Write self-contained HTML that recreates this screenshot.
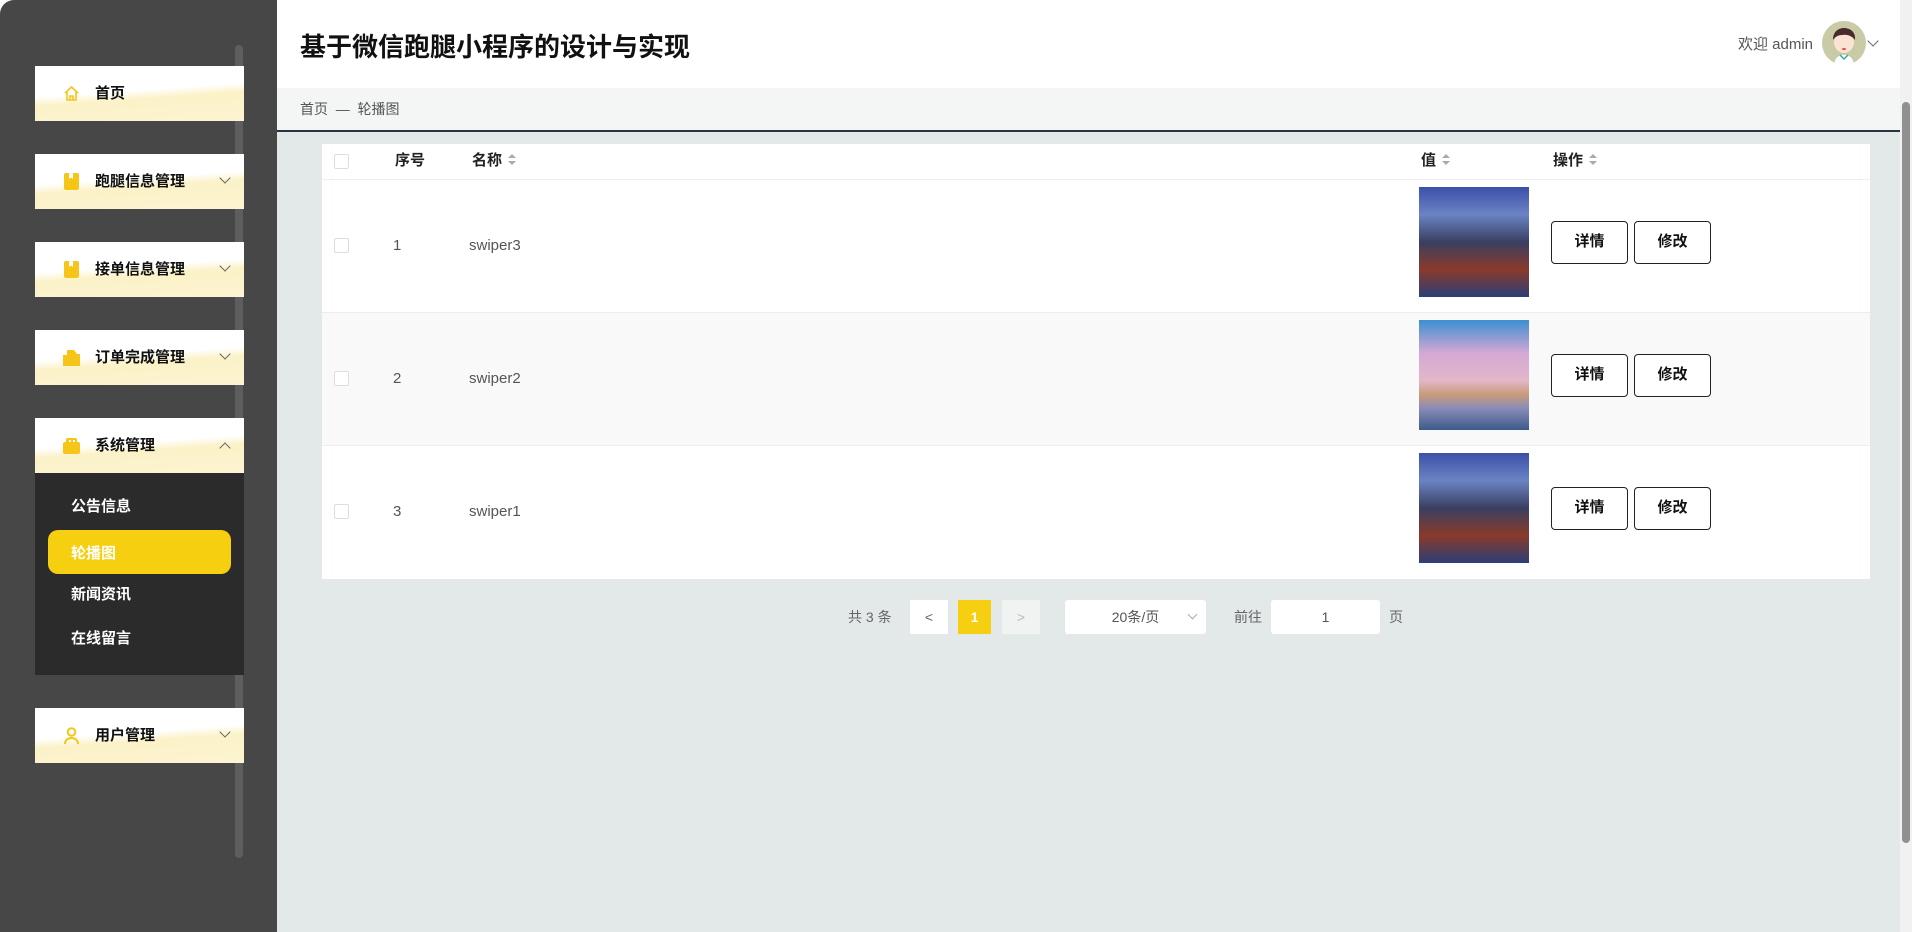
<!DOCTYPE html>
<html><head><meta charset="utf-8">
<style>
*{box-sizing:border-box;margin:0;padding:0}
body{width:1912px;height:932px;overflow:hidden;background:#fff;font-family:"Liberation Sans","Noto Sans CJK SC",sans-serif;position:relative}
.side{position:absolute;left:0;top:0;width:277px;height:932px;background:#474747;border-top-left-radius:14px}
.track{position:absolute;left:235px;top:45px;width:8px;height:813px;background:#5e5e5e;border-radius:4px}
.item{position:absolute;left:35px;width:209px;height:55px;background:linear-gradient(176deg,#fff 0,#fff 45%,#fbf2c8 58%,#fcf4d2 100%)}
.item .t{position:absolute;left:60px;top:0;line-height:55px;font-size:15px;font-weight:bold;color:#111}
.item .ic{position:absolute;left:28px;top:19px;width:17px;height:17px}
.item .ch{position:absolute;left:186px;top:20px;width:8px;height:8px;border-right:1.3px solid #666;border-bottom:1.3px solid #666;transform:rotate(45deg)}
.item .ch.up{transform:rotate(-135deg);top:26px}
.sub{position:absolute;left:35px;top:473px;width:209px;height:202px;background:#2b2b2b}
.sub div{position:absolute;left:36px;font-size:15px;font-weight:bold;color:#fff;line-height:20px}
.pill{position:absolute;left:48px;top:530px;width:183px;height:44px;background:#f6cf10;border-radius:10px}
.main{position:absolute;left:277px;top:0;width:1623px;height:932px;background:#e3e8e8}
.hdr{position:absolute;left:0;top:0;width:1623px;height:88px;background:#fff}
.title{position:absolute;left:23px;top:27px;font-size:26px;font-weight:bold;color:#111}
.bc{position:absolute;left:0;top:88px;width:1623px;height:44px;background:#f4f5f5;border-bottom:2px solid #2c3340;font-size:14px;color:#555;line-height:42px;padding-left:23px}
.tbl{position:absolute;left:45px;top:144px;width:1548px;height:433px;background:#fff}
.th{position:absolute;top:0;left:0;width:1548px;height:36px;border-bottom:1px solid #eee}
.th span{position:absolute;top:0;line-height:34px;font-size:15px;font-weight:bold;color:#222}
.sort{display:inline-block;margin-left:6px;vertical-align:middle;position:relative;top:-1px;width:8px;height:12px}
.sort:before{content:"";position:absolute;left:0;top:0;border:4px solid transparent;border-bottom:4px solid #aaa;border-top:0}
.sort:after{content:"";position:absolute;left:0;top:7px;border:4px solid transparent;border-top:4px solid #aaa;border-bottom:0}
.cb{position:absolute;left:12px;width:15px;height:15px;border:1px solid #ddd;border-radius:2px;background:#fff}
.row{position:absolute;left:0;width:1548px;height:133px;border-bottom:1px solid #eee;font-size:15px;color:#555}
.row .n{position:absolute;left:71px;top:57px}
.row .nm{position:absolute;left:147px;top:57px}
.img{position:absolute;left:1097px;top:7px;width:110px;height:110px}
.btn{position:absolute;top:41px;width:77px;height:43px;border:1.5px solid #222;border-radius:4px;background:#fff;font-size:15px;font-weight:bold;color:#111;text-align:center;line-height:40px}
.pg{position:absolute;top:600px;height:34px;font-size:14px;color:#666;line-height:34px;text-align:center}
.sb{position:absolute;left:1900px;top:0;width:12px;height:932px;background:#f1f1f1}
.sbt{position:absolute;left:1902px;top:102px;width:8px;height:741px;background:#909090;border-radius:4px}
</style></head><body>
<div class="side">
 <div class="track"></div>
 <div class="item" style="top:66px"><svg class="ic" viewBox="0 0 17 17"><path d="M2 8L8.5 2 15 8M4 7v8h9V7M7 15v-4h3v4" fill="none" stroke="#f5c518" stroke-width="1.6"/></svg><div class="t">首页</div></div>
 <div class="item" style="top:154px"><svg class="ic" viewBox="0 0 17 17"><rect x="1" y="0" width="15" height="17" rx="2" fill="#f5c518"/><path d="M6 0v6l2-1.5 2 1.5V0" fill="#fff"/></svg><div class="t">跑腿信息管理</div><div class="ch"></div></div>
 <div class="item" style="top:242px"><svg class="ic" viewBox="0 0 17 17"><rect x="1" y="0" width="15" height="17" rx="2" fill="#f5c518"/><path d="M6 0v6l2-1.5 2 1.5V0" fill="#fff"/></svg><div class="t">接单信息管理</div><div class="ch"></div></div>
 <div class="item" style="top:330px"><svg class="ic" viewBox="0 0 17 17"><path d="M0 17V6h4V1h7l3 4h3v12z" fill="#f5c518"/></svg><div class="t">订单完成管理</div><div class="ch"></div></div>
 <div class="item" style="top:418px"><svg class="ic" viewBox="0 0 17 17"><rect x="0" y="5" width="17" height="12" rx="2" fill="#f5c518"/><rect x="3" y="1" width="11" height="6" rx="2" fill="#f5c518"/><rect x="6" y="3" width="2" height="2" fill="#fff"/><rect x="10" y="3" width="2" height="2" fill="#fff"/></svg><div class="t">系统管理</div><div class="ch up"></div></div>
 <div class="sub">
  <div style="top:24px">公告信息</div>
  <div style="top:112px">新闻资讯</div>
  <div style="top:156px">在线留言</div>
 </div>
 <div class="pill"><div style="position:absolute;left:23px;top:12px;font-size:15px;font-weight:bold;color:#fff">轮播图</div></div>
 <div class="item" style="top:708px"><svg class="ic" viewBox="0 0 17 17"><circle cx="8.5" cy="5" r="3.8" fill="none" stroke="#f5c518" stroke-width="2"/><path d="M2 17c0-4 3-6 6.5-6s6.5 2 6.5 6" fill="none" stroke="#f5c518" stroke-width="2"/></svg><div class="t">用户管理</div><div class="ch"></div></div>
</div>
<div class="main">
 <div class="hdr">
  <div class="title">基于微信跑腿小程序的设计与实现</div>
  <div style="position:absolute;left:1461px;top:33px;font-size:15px;color:#555">欢迎 admin</div>
  <svg style="position:absolute;left:1545px;top:21px" width="44" height="44" viewBox="0 0 44 44"><circle cx="22" cy="22" r="22" fill="#c9cba6"/><ellipse cx="22" cy="21" rx="10" ry="11" fill="#fbe3d3"/><path d="M11 19c0-9 6-12 11-12s12 3 11 12c-3-4-8-6-13-5-4 0-7 2-9 5z" fill="#4a2a2e"/><path d="M12 44c1-8 5-10 10-10s9 2 10 10z" fill="#fff"/><path d="M18 34l4 4 4-4" fill="none" stroke="#3aa" stroke-width="1.5"/><ellipse cx="22" cy="28" rx="2" ry="1" fill="#e44"/></svg>
  <div style="position:absolute;left:1592px;top:37px;width:8px;height:8px;border-right:1.3px solid #666;border-bottom:1.3px solid #666;transform:rotate(45deg)"></div>
 </div>
 <div class="bc">首页&nbsp;&nbsp;—&nbsp;&nbsp;轮播图</div>
 <div class="tbl">
  <div class="th"><div class="cb" style="top:10px"></div>
   <span style="left:73px">序号</span><span style="left:150px">名称<i class="sort"></i></span>
   <span style="left:1099px">值<i class="sort"></i></span><span style="left:1231px">操作<i class="sort"></i></span></div>
  <div class="row" style="top:36px;background:#fff"><div class="cb" style="top:58px"></div><div class="n">1</div><div class="nm">swiper3</div>
   <div class="img" style="background:linear-gradient(180deg,#3c4fa8 0%,#6b84c4 25%,#3a3f62 50%,#8a3a2a 75%,#2c3e78 100%)"></div>
   <div class="btn" style="left:1229px">详情</div><div class="btn" style="left:1312px">修改</div></div>
  <div class="row" style="top:169px;background:#f9f9f9"><div class="cb" style="top:58px"></div><div class="n">2</div><div class="nm">swiper2</div>
   <div class="img" style="background:linear-gradient(180deg,#3b8fd0 0%,#d4a8d4 30%,#e2b7c8 55%,#c99a7a 68%,#8a8cb8 80%,#3d5a8a 100%)"></div>
   <div class="btn" style="left:1229px">详情</div><div class="btn" style="left:1312px">修改</div></div>
  <div class="row" style="top:302px;background:#fff;border-bottom:0"><div class="cb" style="top:58px"></div><div class="n">3</div><div class="nm">swiper1</div>
   <div class="img" style="background:linear-gradient(180deg,#3c4fa8 0%,#6b84c4 25%,#3a3f62 50%,#8a3a2a 75%,#2c3e78 100%)"></div>
   <div class="btn" style="left:1229px">详情</div><div class="btn" style="left:1312px">修改</div></div>
 </div>
 <div class="pg" style="left:571px">共 3 条</div>
 <div class="pg" style="left:633px;width:38px;background:#fff">&lt;</div>
 <div class="pg" style="left:681px;width:33px;background:#f6cf10;color:#fff;font-weight:bold">1</div>
 <div class="pg" style="left:725px;width:38px;background:#f1f3f3;color:#bbb">&gt;</div>
 <div class="pg" style="left:788px;width:141px;background:#fff;border-radius:3px;color:#555">20条/页<span style="position:absolute;right:10px;top:11px;width:7px;height:7px;border-right:1px solid #aaa;border-bottom:1px solid #aaa;transform:rotate(45deg)"></span></div>
 <div class="pg" style="left:957px">前往</div>
 <div class="pg" style="left:994px;width:109px;background:#fff;border-radius:3px;color:#555">1</div>
 <div class="pg" style="left:1112px">页</div>
</div>
<div class="sb"></div><div class="sbt"></div>
</body></html>
